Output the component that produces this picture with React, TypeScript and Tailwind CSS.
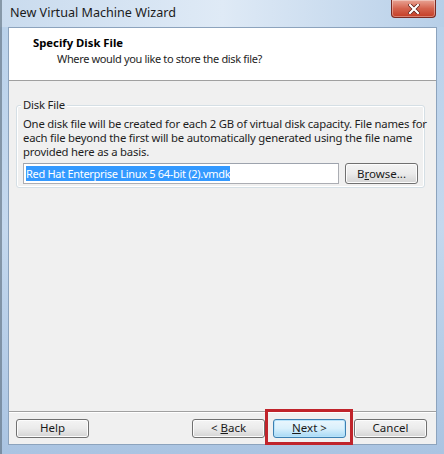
import React from "react";

const font = { fontFamily: '"Segoe UI", "Noto Sans", "Open Sans", sans-serif' };

function Btn({ children, className = "" }: { children: React.ReactNode; className?: string }) {
  return (
    <div
      className={
        "h-[19px] w-[73px] flex items-center justify-center rounded-[3px] border border-[#707070] bg-gradient-to-b from-[#f4f4f4] via-[#ebebeb] to-[#d4d4d4] text-[11.5px] leading-[14px] text-[#1a1a1a] shadow-[inset_0_0_0_1px_#fcfcfc] " +
        className
      }
    >
      {children}
    </div>
  );
}

export default function App() {
  return (
    <div
      className="w-[444px] h-[454px] relative overflow-hidden flex flex-col bg-gradient-to-b from-[#b9d1ea] via-[#c4d8ee] to-[#aac4e2] text-[#1e1e1e]"
      style={font}
    >
      {/* dark strip of background behind window */}
      <div className="absolute left-0 top-0 bottom-0 w-[2px] bg-[#5a6a7a] opacity-60" />
      {/* title bar */}
      <div className="h-[27px] shrink-0 flex items-start pl-[10px] pr-[8px] bg-gradient-to-r from-[#c9dbee] via-[#dfeaf6] to-[#b7cfe8]">
        <div className="pt-[4px] text-[12.6px] leading-[18px] text-[#1b1b1b]">New Virtual Machine Wizard</div>
        <div className="ml-auto w-[45px] h-[18px] rounded-b-[4px] border border-[#7a2a22] border-t-0 bg-gradient-to-b from-[#e8a394] via-[#d4634e] to-[#c43c24] flex items-center justify-center shadow-[inset_0_0_0_1px_rgba(255,255,255,0.35)]">
          <svg width="12" height="10" viewBox="0 0 12 10">
            <path d="M2 1 L10 9 M10 1 L2 9" stroke="#5a1a12" strokeWidth="3.6" strokeLinecap="square" />
            <path d="M2 1 L10 9 M10 1 L2 9" stroke="#ffffff" strokeWidth="2.2" strokeLinecap="square" />
          </svg>
        </div>
      </div>

      {/* client area */}
      <div className="flex-1 mr-[7px] ml-[8px] mb-[9px] border border-[#8ca3bd] flex flex-col bg-[#f0f0f0]">
        {/* header */}
        <div className="h-[53px] shrink-0 bg-white border-b border-[#a0a0a0] pt-[6px]">
          <div className="pl-[24px] text-[11.3px] font-bold leading-[17px] text-[#000]">Specify Disk File</div>
          <div className="pl-[48px] text-[11px] leading-[16px] tracking-[-0.35px] text-[#1e1e1e]">
            Where would you like to store the disk file?
          </div>
        </div>

        {/* body */}
        <div className="flex-1 flex flex-col pl-[7px] pr-[11px] pt-[24px]">
          <div className="relative border border-[#d5dfe5] rounded-[3px] pt-[11px] pb-[3px] px-[6px] shadow-[inset_0_0_0_1px_#fff]">
            <div className="absolute -top-[9px] left-[4px] px-[2px] bg-[#f0f0f0] text-[11.3px] leading-[16px] tracking-[-0.2px]">
              Disk File
            </div>
            <div className="text-[11.3px] leading-[14px] tracking-[-0.2px] whitespace-nowrap">
              <div>One disk file will be created for each 2 GB of virtual disk capacity. File names for</div>
              <div>each file beyond the first will be automatically generated using the file name</div>
              <div>provided here as a basis.</div>
            </div>
            <div className="flex items-center mt-[4px] gap-[6px]">
              <div className="w-[316px] h-[21px] border border-[#abadb3] border-t-[#9da3ad] bg-white flex items-center pl-[2px]">
                <span className="bg-[#3399ff] text-white text-[11px] leading-[15px] tracking-[-0.3px]">
                  Red Hat Enterprise Linux 5 64-bit (2).vmdk
                </span>
              </div>
              <Btn className="h-[21px]">
                <span>
                  B<span className="underline">r</span>owse...
                </span>
              </Btn>
            </div>
          </div>
        </div>

        {/* footer */}
        <div className="h-[33px] shrink-0 border-t border-[#a0a0a0] shadow-[inset_0_1px_0_#fff] flex items-center pl-[7px] pr-[9px]">
          <Btn>Help</Btn>
          <div className="ml-auto flex items-center gap-[8px]">
            <Btn>
              <span>
                &lt; <span className="underline">B</span>ack
              </span>
            </Btn>
            <div className="relative">
              <div className="h-[19px] w-[73px] flex items-center justify-center rounded-[3px] border border-[#3c7fb1] bg-gradient-to-b from-[#eaf6fd] via-[#d9f0fc] to-[#a7d9f5] text-[11.5px] leading-[14px] text-[#1a1a1a] shadow-[inset_0_0_0_1px_#b8e3fa]">
                <span>
                  <span className="underline">N</span>ext &gt;
                </span>
              </div>
              <div className="absolute left-[-8px] right-[-7px] top-[-10px] bottom-[-7px] border-[3px] border-[#c0242b]" />
            </div>
            <Btn>Cancel</Btn>
          </div>
        </div>
      </div>
    </div>
  );
}
